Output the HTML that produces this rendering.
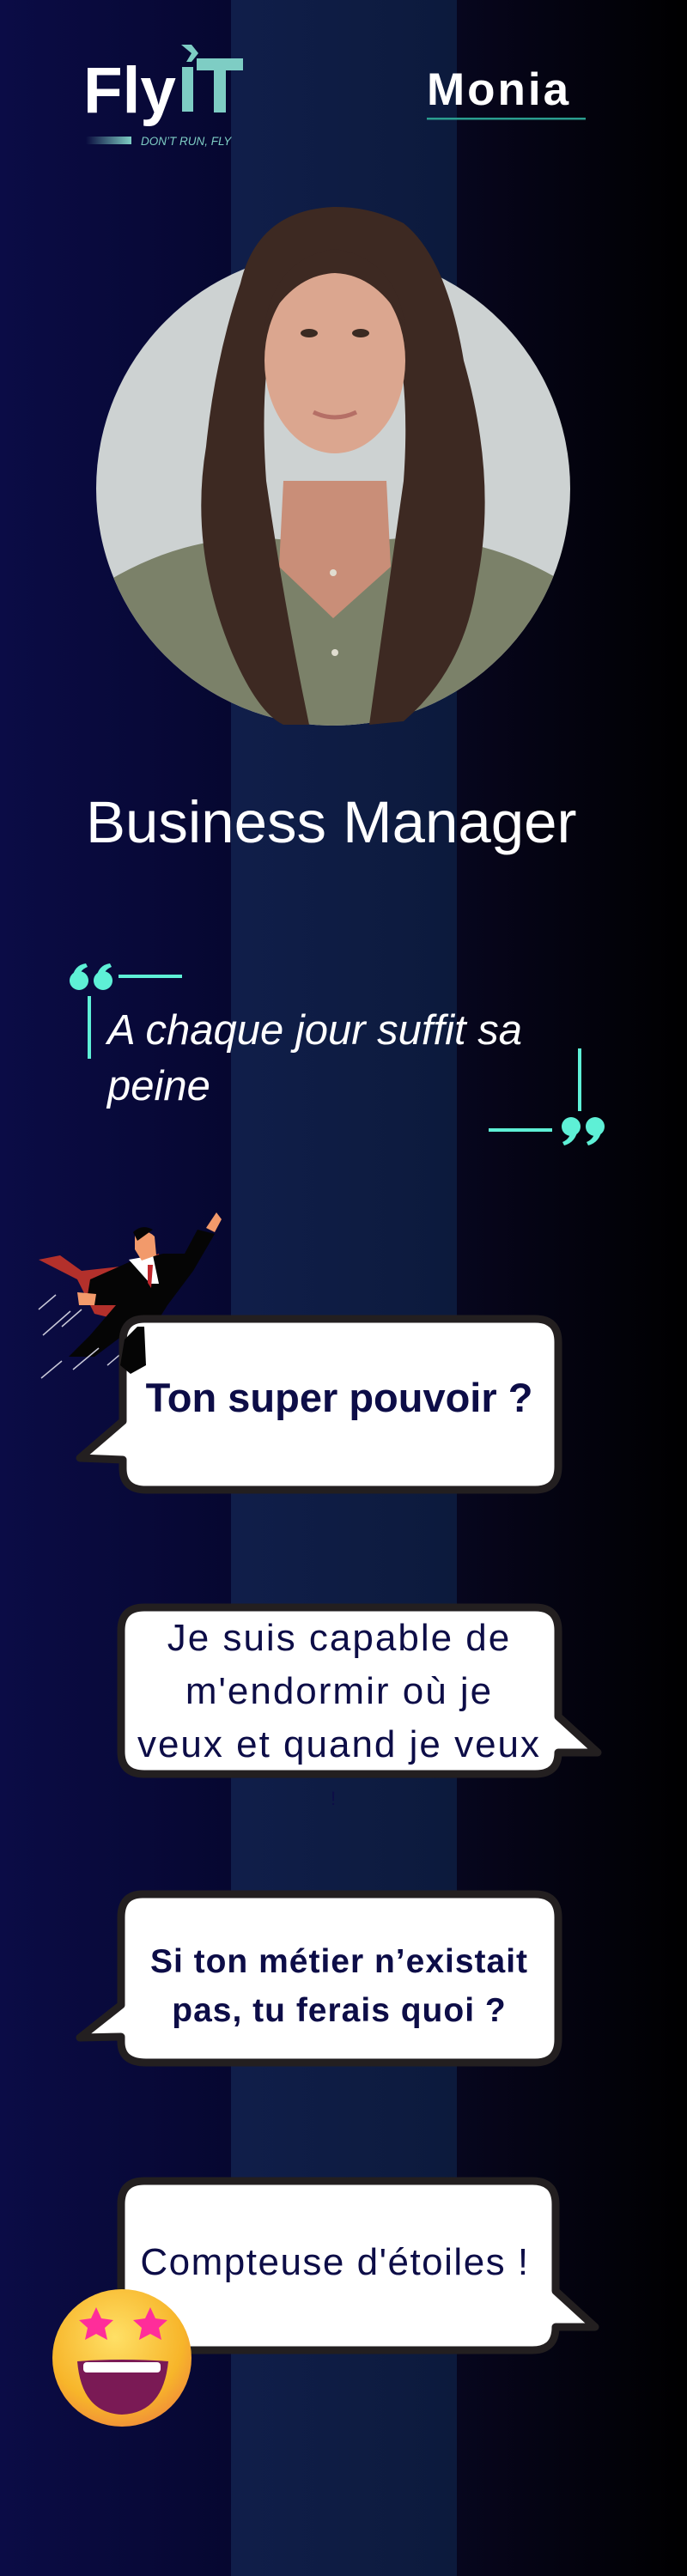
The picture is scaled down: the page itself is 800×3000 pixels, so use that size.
<!DOCTYPE html>
<html><head><meta charset="utf-8"><style>
html,body{margin:0;padding:0}
body{width:800px;height:3000px;position:relative;overflow:hidden;background:#000;font-family:"Liberation Sans",sans-serif}
.a{position:absolute}
.t{position:absolute;text-align:center;color:#0d0d47;left:145px;width:500px}
</style></head><body>
<div class="a" style="left:0;top:0;width:269px;height:3000px;background:linear-gradient(90deg,#0b0c46,#060730)"></div>
<div class="a" style="left:269px;top:0;width:263px;height:3000px;background:linear-gradient(90deg,#101e4a,#0c1a3c)"></div>
<div class="a" style="left:532px;top:0;width:268px;height:3000px;background:linear-gradient(90deg,#07061e,#000)"></div>

<svg class="a" style="left:0;top:0" width="800" height="3000" viewBox="0 0 800 3000">
<defs>
<linearGradient id="bar" x1="0" x2="1"><stop offset="0" stop-color="#7ecdc4" stop-opacity="0"/><stop offset="1" stop-color="#7ecdc4"/></linearGradient>
<clipPath id="cc"><circle cx="388" cy="569" r="276"/></clipPath>
<radialGradient id="em" cx="0.45" cy="0.35" r="0.7"><stop offset="0" stop-color="#ffe066"/><stop offset="0.7" stop-color="#f7b52a"/><stop offset="1" stop-color="#f08a3a"/></radialGradient>
</defs>
<!-- logo -->
<text x="97" y="131" fill="#fff" font-size="76" font-weight="bold" textLength="108" lengthAdjust="spacingAndGlyphs" font-family="Liberation Sans,sans-serif">Fly</text>
<path d="M211,52 L223,52 L231,62 L223,72 L217,72 L223,62 Z" fill="#7ecdc4"/>
<rect x="212" y="78" width="13" height="52" fill="#7ecdc4"/>
<path d="M229,68 H283 V82 H263 V131 H249 V82 H229 Z" fill="#7ecdc4"/>
<rect x="100" y="159" width="53" height="9" fill="url(#bar)"/>
<text x="164" y="169" fill="#7ecdc4" font-size="13.5" font-style="italic" font-family="Liberation Sans,sans-serif">DON’T RUN, FLY</text>
<!-- name -->
<text x="497" y="122" fill="#fff" font-size="53" font-weight="bold" letter-spacing="3" font-family="Liberation Sans,sans-serif">Monia</text>
<rect x="497" y="137" width="185" height="2.5" fill="#2a9d8f"/>
<!-- photo -->
<g>
<circle cx="388" cy="569" r="276" fill="#cdd2d2"/>
<g clip-path="url(#cc)">
<path d="M120,680 Q250,600 388,640 Q530,600 660,680 L680,860 L100,860 Z" fill="#7b8169"/>
<path d="M330,560 L450,560 L455,660 L388,720 L325,660 Z" fill="#c98e78"/>
</g>
<path d="M388,241 Q300,245 280,330 Q250,420 240,520 Q220,640 270,760 Q300,830 330,844 L360,844 Q330,700 310,560 Q300,420 330,340 Q388,290 445,340 Q480,420 470,560 Q450,700 430,844 L470,840 Q540,780 555,680 Q580,560 540,420 Q520,300 470,260 Q430,240 388,241 Z" fill="#3d2922"/>
<ellipse cx="390" cy="420" rx="82" ry="108" fill="#dba68f"/>
<path d="M308,380 Q320,300 390,290 Q460,300 472,380 Q440,320 390,318 Q340,320 308,380 Z" fill="#3d2922"/>
<ellipse cx="360" cy="388" rx="10" ry="5" fill="#3a2a22"/>
<ellipse cx="420" cy="388" rx="10" ry="5" fill="#3a2a22"/>
<path d="M365,480 Q390,492 415,480" stroke="#b56f66" stroke-width="5" fill="none"/>
<circle cx="388" cy="667" r="4" fill="#e0ddd0"/><circle cx="390" cy="760" r="4" fill="#e0ddd0"/>
</g>
<!-- quotes -->
<g fill="#5ef0d6">
<circle cx="92" cy="1142" r="11"/><path d="M84,1140 Q86,1124 100,1122 L102,1126 Q92,1130 92,1140 Z"/>
<circle cx="120" cy="1142" r="11"/><path d="M112,1140 Q114,1124 128,1122 L130,1126 Q120,1130 120,1140 Z"/>
<circle cx="665" cy="1312" r="11"/><path d="M673,1314 Q671,1330 657,1334 L655,1330 Q665,1326 665,1314 Z"/>
<circle cx="693" cy="1312" r="11"/><path d="M701,1314 Q699,1330 685,1334 L683,1330 Q693,1326 693,1314 Z"/>
</g>
<rect x="138" y="1135" width="74" height="4" fill="#5ef0d6"/>
<rect x="102" y="1160" width="4" height="73" fill="#5ef0d6"/>
<rect x="673" y="1221" width="4" height="73" fill="#5ef0d6"/>
<rect x="569" y="1314" width="74" height="4" fill="#5ef0d6"/>
<!-- superhero -->
<path d="M45,1467 L70,1462 L95,1480 L140,1475 L185,1460 L195,1520 L150,1540 L110,1530 L90,1490 Z" fill="#b3302b"/>
<path d="M240,1430 L252,1412 L258,1420 L250,1435 Z" fill="#f29a6b"/>
<path d="M230,1432 L250,1437 L225,1480 L195,1520 L170,1560 L160,1590 L140,1585 L150,1550 L110,1580 L80,1580 L105,1555 L135,1520 L100,1520 L105,1490 L150,1470 L190,1460 L215,1460 Z" fill="#050505"/>
<path d="M150,1467 L178,1462 L185,1495 L175,1495 Z" fill="#fff"/>
<path d="M172,1473 L178,1473 L176,1500 L172,1494 Z" fill="#c1272d"/>
<path d="M157,1437 Q170,1430 180,1440 L182,1462 L165,1468 L157,1455 Z" fill="#f29a6b"/>
<path d="M155,1435 Q165,1425 178,1432 L160,1445 Z" fill="#050505"/>
<path d="M90,1505 L112,1507 L110,1520 L92,1520 Z" fill="#f29a6b"/>
<g stroke="#c8c8d8" stroke-width="1.5"><line x1="45" y1="1525" x2="65" y2="1508"/><line x1="50" y1="1555" x2="82" y2="1527"/><line x1="72" y1="1545" x2="95" y2="1525"/><line x1="48" y1="1605" x2="72" y2="1585"/><line x1="85" y1="1595" x2="115" y2="1570"/><line x1="125" y1="1590" x2="158" y2="1562"/></g>
<!-- bubbles -->
<g fill="#fff" stroke="#231f20" stroke-width="9" stroke-linejoin="round">
<path d="M168,1536 H623 Q650,1536 650,1563 V1708 Q650,1735 623,1735 H170 Q143,1735 143,1710 V1700 L93,1698 L143,1655 V1563 Q143,1536 168,1536 Z"/>
<path d="M168,1872 H623 Q650,1872 650,1899 V1999 L696,2041 H650 Q650,2066 623,2066 H168 Q141,2066 141,2040 V1899 Q141,1872 168,1872 Z"/>
<path d="M166,2206 H623 Q650,2206 650,2233 V2375 Q650,2402 623,2402 H170 Q141,2402 141,2378 V2372 L93,2373 L141,2335 V2233 Q141,2206 166,2206 Z"/>
<path d="M168,2540 H620 Q647,2540 647,2567 V2668 L693,2710 H647 Q647,2737 620,2737 H168 Q141,2737 141,2710 V2567 Q141,2540 168,2540 Z"/>
</g>
<path d="M160,1545 L168,1545 L170,1590 L152,1600 L140,1590 L145,1560 Z" fill="#050505"/>
<!-- emoji -->
<ellipse cx="142" cy="2746" rx="81" ry="80" fill="url(#em)"/>
<path d="M90,2750 Q142,2746 196,2750 Q190,2810 142,2812 Q95,2810 90,2750 Z" fill="#7a1a55"/>
<rect x="97" y="2751" width="90" height="12" rx="4" fill="#fff"/>
<path d="M112,2687 L118,2700 L132,2702 L122,2711 L125,2725 L112,2718 L99,2725 L102,2711 L92,2702 L106,2700 Z" fill="#ff2d9a"/>
<path d="M175,2687 L181,2700 L195,2702 L185,2711 L188,2725 L175,2718 L162,2725 L165,2711 L155,2702 L169,2700 Z" fill="#ff2d9a"/>
</svg>

<div class="a" style="top:918px;width:700px;text-align:left;color:#fff;font-size:69px;left:100px">Business Manager</div>
<div class="a" style="left:125px;top:1168px;width:520px;color:#fff;font-size:49px;font-style:italic;font-weight:300;line-height:65px">A chaque jour suffit sa peine</div>

<div class="t" style="top:1600px;font-size:47px;font-weight:bold;left:130px;width:530px">Ton super pouvoir ?</div>
<div class="t" style="top:1877px;font-size:44px;line-height:62px;letter-spacing:2px;left:125px;width:540px">Je suis capable de<br>m'endormir où je<br>veux et quand je veux</div>
<div class="a" style="left:385px;top:2082px;color:#0d0d47;font-size:22px">!</div>
<div class="t" style="top:2256px;font-size:39px;font-weight:bold;line-height:57px;letter-spacing:1px;left:130px;width:530px">Si ton métier n’existait<br>pas, tu ferais quoi ?</div>
<div class="t" style="top:2610px;font-size:44px;letter-spacing:1.5px;left:135px;width:510px">Compteuse d'étoiles !</div>
</body></html>
